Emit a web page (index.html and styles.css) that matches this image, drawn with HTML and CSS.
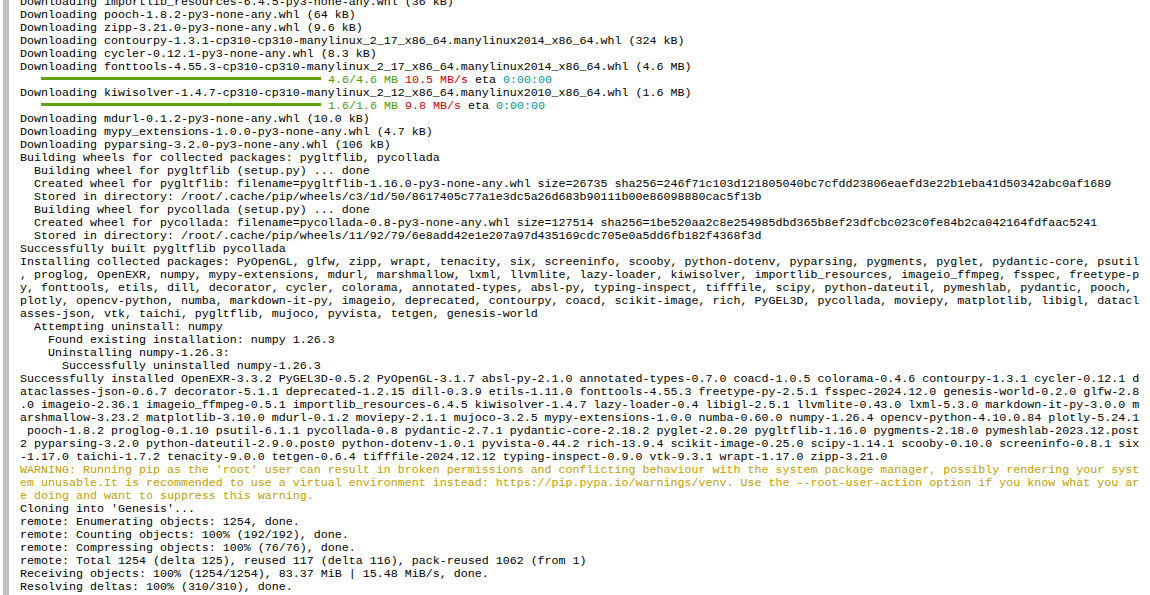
FILE: index.html
```html
<!DOCTYPE html>
<html lang="en">
<head>
<meta charset="utf-8">
<title>pip install log</title>
<link rel="stylesheet" href="styles.css">
</head>
<body>
<div class="output">
<div class="gutter"></div>
<pre class="log">Downloading importlib_resources-6.4.5-py3-none-any.whl (36 kB)
Downloading pooch-1.8.2-py3-none-any.whl (64 kB)
Downloading zipp-3.21.0-py3-none-any.whl (9.6 kB)
Downloading contourpy-1.3.1-cp310-cp310-manylinux_2_17_x86_64.manylinux2014_x86_64.whl (324 kB)
Downloading cycler-0.12.1-py3-none-any.whl (8.3 kB)
Downloading fonttools-4.55.3-cp310-cp310-manylinux_2_17_x86_64.manylinux2014_x86_64.whl (4.6 MB)
   <span class="bar"></span> <span class="g">4.6/4.6 MB</span> <span class="r">10.5 MB/s</span> eta <span class="c">0:00:00</span>
Downloading kiwisolver-1.4.7-cp310-cp310-manylinux_2_12_x86_64.manylinux2010_x86_64.whl (1.6 MB)
   <span class="bar"></span> <span class="g">1.6/1.6 MB</span> <span class="r">9.8 MB/s</span> eta <span class="c">0:00:00</span>
Downloading mdurl-0.1.2-py3-none-any.whl (10.0 kB)
Downloading mypy_extensions-1.0.0-py3-none-any.whl (4.7 kB)
Downloading pyparsing-3.2.0-py3-none-any.whl (106 kB)
Building wheels for collected packages: pygltflib, pycollada
  Building wheel for pygltflib (setup.py) ... done
  Created wheel for pygltflib: filename=pygltflib-1.16.0-py3-none-any.whl size=26735 sha256=246f71c103d121805040bc7cfdd23806eaefd3e22b1eba41d50342abc0af1689
  Stored in directory: /root/.cache/pip/wheels/c3/1d/50/8617405c77a1e3dc5a26d683b90111b00e86098880cac5f13b
  Building wheel for pycollada (setup.py) ... done
  Created wheel for pycollada: filename=pycollada-0.8-py3-none-any.whl size=127514 sha256=1be520aa2c8e254985dbd365b8ef23dfcbc023c0fe84b2ca042164fdfaac5241
  Stored in directory: /root/.cache/pip/wheels/11/92/79/6e8add42e1e207a97d435169cdc705e0a5dd6fb182f4368f3d
Successfully built pygltflib pycollada
Installing collected packages: PyOpenGL, glfw, zipp, wrapt, tenacity, six, screeninfo, scooby, python-dotenv, pyparsing, pygments, pyglet, pydantic-core, psutil
, proglog, OpenEXR, numpy, mypy-extensions, mdurl, marshmallow, lxml, llvmlite, lazy-loader, kiwisolver, importlib_resources, imageio_ffmpeg, fsspec, freetype-p
y, fonttools, etils, dill, decorator, cycler, colorama, annotated-types, absl-py, typing-inspect, tifffile, scipy, python-dateutil, pymeshlab, pydantic, pooch, 
plotly, opencv-python, numba, markdown-it-py, imageio, deprecated, contourpy, coacd, scikit-image, rich, PyGEL3D, pycollada, moviepy, matplotlib, libigl, datacl
asses-json, vtk, taichi, pygltflib, mujoco, pyvista, tetgen, genesis-world
  Attempting uninstall: numpy
    Found existing installation: numpy 1.26.3
    Uninstalling numpy-1.26.3:
      Successfully uninstalled numpy-1.26.3
Successfully installed OpenEXR-3.3.2 PyGEL3D-0.5.2 PyOpenGL-3.1.7 absl-py-2.1.0 annotated-types-0.7.0 coacd-1.0.5 colorama-0.4.6 contourpy-1.3.1 cycler-0.12.1 d
ataclasses-json-0.6.7 decorator-5.1.1 deprecated-1.2.15 dill-0.3.9 etils-1.11.0 fonttools-4.55.3 freetype-py-2.5.1 fsspec-2024.12.0 genesis-world-0.2.0 glfw-2.8
.0 imageio-2.36.1 imageio_ffmpeg-0.5.1 importlib_resources-6.4.5 kiwisolver-1.4.7 lazy-loader-0.4 libigl-2.5.1 llvmlite-0.43.0 lxml-5.3.0 markdown-it-py-3.0.0 m
arshmallow-3.23.2 matplotlib-3.10.0 mdurl-0.1.2 moviepy-2.1.1 mujoco-3.2.5 mypy-extensions-1.0.0 numba-0.60.0 numpy-1.26.4 opencv-python-4.10.0.84 plotly-5.24.1
 pooch-1.8.2 proglog-0.1.10 psutil-6.1.1 pycollada-0.8 pydantic-2.7.1 pydantic-core-2.18.2 pyglet-2.0.20 pygltflib-1.16.0 pygments-2.18.0 pymeshlab-2023.12.post
2 pyparsing-3.2.0 python-dateutil-2.9.0.post0 python-dotenv-1.0.1 pyvista-0.44.2 rich-13.9.4 scikit-image-0.25.0 scipy-1.14.1 scooby-0.10.0 screeninfo-0.8.1 six
-1.17.0 taichi-1.7.2 tenacity-9.0.0 tetgen-0.6.4 tifffile-2024.12.12 typing-inspect-0.9.0 vtk-9.3.1 wrapt-1.17.0 zipp-3.21.0
<span class="w">WARNING: Running pip as the 'root' user can result in broken permissions and conflicting behaviour with the system package manager, possibly rendering your syst
em unusable.It is recommended to use a virtual environment instead: https://pip.pypa.io/warnings/venv. Use the --root-user-action option if you know what you ar
e doing and want to suppress this warning.</span>
Cloning into 'Genesis'...
remote: Enumerating objects: 1254, done.
remote: Counting objects: 100% (192/192), done.
remote: Compressing objects: 100% (76/76), done.
remote: Total 1254 (delta 125), reused 117 (delta 116), pack-reused 1062 (from 1)
Receiving objects: 100% (1254/1254), 83.37 MiB | 15.48 MiB/s, done.
Resolving deltas: 100% (310/310), done.
</pre>
</div>
</body>
</html>
```

FILE: styles.css
```css
html, body {
  margin: 0;
  padding: 0;
  height: 100%;
  overflow: hidden;
  background: #ffffff;
}

.output {
  display: flex;
  height: 100vh;
  overflow: hidden;
}

.gutter {
  flex: 0 0 6px;
  margin-left: 3px;
  background: #c2c2c2;
}

.log {
  margin: -4px 0 0 0;
  padding-left: 11px;
  font-family: "Liberation Mono", "DejaVu Sans Mono", monospace;
  font-size: 11.665px;
  line-height: 13px;
  color: #000000;
  white-space: pre;
}

.bar {
  display: inline-block;
  width: 280px;
  height: 3px;
  background: #5fa30e;
  vertical-align: 3px;
}

.g { color: #4e9a06; }
.r { color: #cc0000; }
.c { color: #06989a; }
.w { color: #c4a000; }
```
